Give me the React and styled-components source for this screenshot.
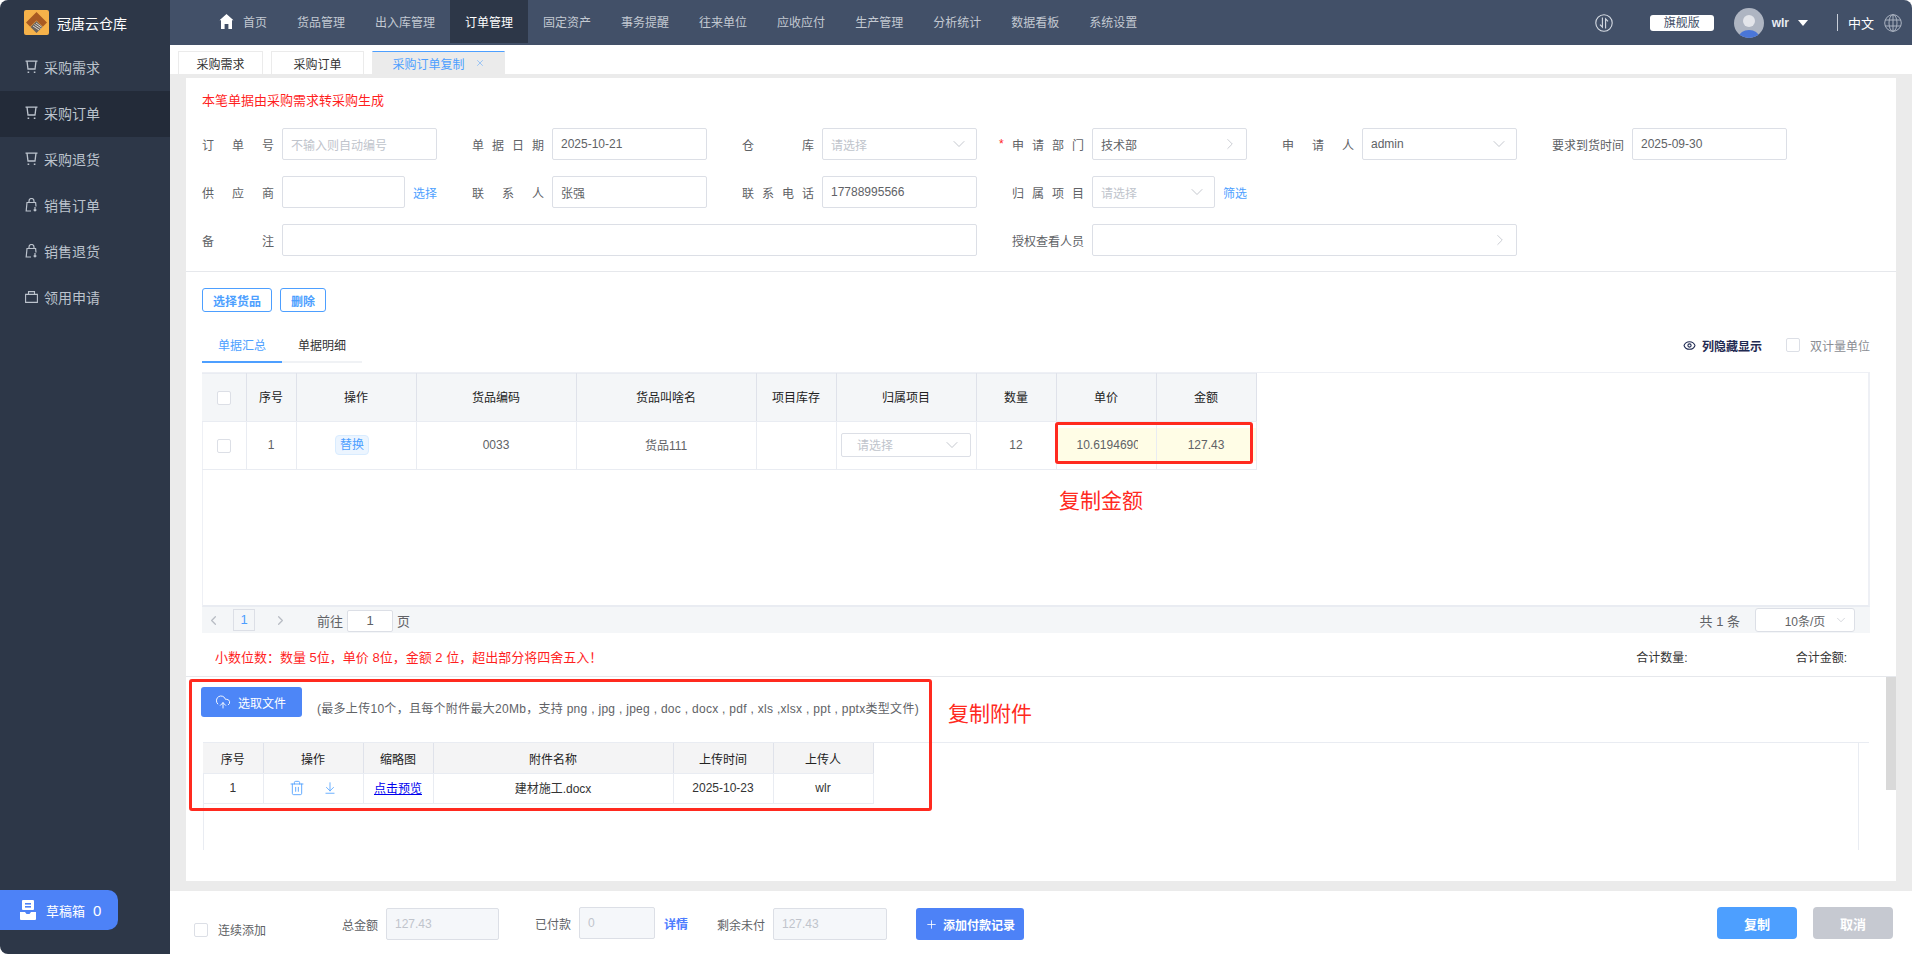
import React from "react";
import styled, { createGlobalStyle } from "styled-components";
import { ChevronDown, ChevronRight, ChevronLeft, Plus, X, Eye, Trash2, ArrowDownToLine, CloudUpload } from "lucide-react";

const GlobalStyle = createGlobalStyle`
  html, body { margin: 0; padding: 0; height: 100%; background: #fff; }
  body { font-family: "Liberation Sans", "Noto Sans CJK SC", sans-serif; font-size: 12px; color: #606266; overflow: hidden; }
  * { box-sizing: border-box; }
`;

const Shell = styled.div`
  width: 1912px;
  height: 954px;
  display: flex;
  overflow: hidden;
  border-radius: 8px;
`;

const Sidebar = styled.aside`
  width: 170px;
  flex: none;
  background: #2d3748;
  display: flex;
  flex-direction: column;
`;

const Brand = styled.div`
  height: 45px;
  display: flex;
  align-items: center;
  gap: 8px;
  padding-left: 24px;
  color: #fff;
  font-size: 14px;
`;

const SideItem = styled.div`
  height: 46px;
  display: flex;
  align-items: center;
  gap: 6px;
  padding: 0 0 2px 25px;
  font-size: 14px;
  color: #bcc3cd;
  background: ${(p) => (p.$active ? "#232b39" : "transparent")};
`;

const Draft = styled.div`
  margin-top: auto;
  margin-bottom: 24px;
  width: 118px;
  height: 40px;
  display: flex;
  align-items: center;
  padding-left: 20px;
  gap: 10px;
  background: #4d82f7;
  border-radius: 0 10px 10px 0;
  color: #fff;
  font-size: 13px;
  & b { font-weight: 400; font-size: 15px; margin-left: -2px; }
`;

const Main = styled.div`
  flex: 1;
  min-width: 0;
  display: flex;
  flex-direction: column;
`;

const Topbar = styled.header`
  height: 45px;
  flex: none;
  background: #425068;
  display: flex;
  padding-left: 34px;
  color: #c3c9d2;
`;

const NavItem = styled.div`
  height: ${(p) => (p.$active ? "43px" : "45px")};
  padding: 0 15px ${(p) => (p.$active ? "0" : "2px")};
  display: flex;
  align-items: center;
  gap: 9px;
  color: ${(p) => (p.$active ? "#fff" : "#c3c9d2")};
  background: ${(p) => (p.$active ? "#2d3748" : "transparent")};
  white-space: nowrap;
`;

const TopRight = styled.div`
  margin-left: auto;
  display: flex;
  align-items: center;
  padding-right: 10px;
  color: #fff;
`;

const Edition = styled.div`
  width: 64px;
  height: 16px;
  margin: 0 20px 0 37px;
  background: #fff;
  border-radius: 3px;
  color: #425068;
  font-size: 12px;
  line-height: 16px;
  text-align: center;
`;

const UserName = styled.span`
  margin: 0 9px 0 8px;
  font-size: 12px;
  font-weight: 700;
  color: #e7ebf1;
`;

const Caret = styled.i`
  width: 0;
  height: 0;
  border-left: 5px solid transparent;
  border-right: 5px solid transparent;
  border-top: 6px solid #fff;
`;

const Divider = styled.i`
  width: 1px;
  height: 17px;
  background: #c8ced8;
  margin: 0 10px 0 29px;
`;

const Lang = styled.span`
  font-size: 13px;
  margin-right: 10px;
`;

const TabStrip = styled.div`
  height: 29px;
  flex: none;
  display: flex;
  align-items: flex-end;
  gap: 8px;
  padding-left: 8px;
  background: #fff;
`;

const PageTab = styled.div`
  width: ${(p) => p.$w}px;
  height: 23px;
  display: flex;
  align-items: center;
  justify-content: center;
  gap: 10px;
  font-size: 12px;
  color: ${(p) => (p.$active ? "#4d9fff" : "#333")};
  background: ${(p) => (p.$active ? "#ebebeb" : "#fff")};
  border: 1px solid #ebebeb;
  border-bottom: 0;
  border-top-color: ${(p) => (p.$active ? "#4d9fff" : "#ebebeb")};
`;

const Content = styled.div`
  flex: 1;
  min-height: 0;
  background: #ebebeb;
  padding: 4px 16px 10px 16px;
`;

const Panel = styled.div`
  position: relative;
  height: 100%;
  background: #fff;
`;

const FormSection = styled.section`
  padding: 14px 16px 15px;
  border-bottom: 1px solid #e6e8ec;
`;

const RedNote = styled.div`
  color: #ff1f1f;
  font-size: 13px;
  line-height: 18px;
`;

const FormGrid = styled.div`
  margin-top: 18px;
  display: grid;
  grid-template-columns: repeat(6, 235px);
  column-gap: 35px;
  row-gap: 16px;
`;

const Field = styled.div`
  display: flex;
  align-items: center;
  gap: 8px;
  position: relative;
  grid-column: span ${(p) => p.$span || 1};
`;

const FieldGap = styled.span`
  grid-column: span 2;
`;

const Label = styled.label`
  position: relative;
  width: 72px;
  flex: none;
  text-align: justify;
  text-align-last: justify;
  color: #606266;
  font-size: 12px;
`;

const Star = styled.span`
  position: absolute;
  left: -13px;
  top: 1px;
  color: #ff1f1f;
`;

const Box = styled.div`
  flex: 1;
  min-width: 0;
  height: ${(p) => p.$h || 32}px;
  padding: 0 ${(p) => p.$pr || 9}px 0 ${(p) => p.$pl || 8}px;
  display: flex;
  align-items: center;
  justify-content: space-between;
  border: 1px solid #dcdfe6;
  border-radius: 2px;
  background: ${(p) => (p.$disabled ? "#f5f7fa" : "#fff")};
  color: ${(p) => (p.$muted ? "#c0c4cc" : "#606266")};
  font-size: 12px;
  white-space: nowrap;
  & svg { color: #b8bcc4; flex: none; margin-right: -2px; }
`;

const TextLink = styled.a`
  color: #4d9fff;
  font-size: 12px;
  flex: none;
`;

const Actions = styled.div`
  padding: 16px 16px 0;
  display: flex;
  gap: 8px;
`;

const GhostButton = styled.button`
  width: ${(p) => p.$w}px;
  height: 24px;
  padding: 0;
  background: #fff;
  border: 1px solid #4d9fff;
  border-radius: 3px;
  color: #4d9fff;
  font: 700 12px "Liberation Sans", "Noto Sans CJK SC", sans-serif;
`;

const ToolRow = styled.div`
  margin: 21px 26px 0 16px;
  display: flex;
  justify-content: space-between;
  align-items: flex-start;
`;

const SubTabs = styled.div`
  width: 160px;
  display: flex;
  border-bottom: 2px solid #f0f2f5;
`;

const SubTab = styled.div`
  width: 80px;
  height: 30px;
  margin-bottom: -2px;
  text-align: center;
  line-height: 26px;
  font-size: 12px;
  color: ${(p) => (p.$active ? "#4d9fff" : "#333")};
  border-bottom: 2px solid ${(p) => (p.$active ? "#4d9fff" : "transparent")};
`;

const Tools = styled.div`
  height: 24px;
  display: flex;
  align-items: center;
  & svg { color: #1f2a52; margin-right: 6px; }
`;

const HiddenCols = styled.span`
  font-weight: 700;
  color: #1f2a52;
  margin-right: 24px;
`;

const Check = styled.i`
  display: block;
  width: 14px;
  height: 14px;
  flex: none;
  background: #fff;
  border: 1px solid #dcdfe6;
  border-radius: 2px;
`;

const CheckLabel = styled.span`
  color: #8a8d93;
  margin-left: 10px;
`;

const TableWrap = styled.div`
  position: relative;
  margin: 9px 26px 0 16px;
  height: 235px;
  border: 1px solid #eef0f5;
  border-right-width: 2px;
  border-bottom: 2px solid #e9ecf2;
`;

const Table = styled.table`
  border-collapse: collapse;
  table-layout: fixed;
  width: ${(p) => p.$w}px;
  margin-left: -1px;
  & th, & td {
    padding: 0;
    text-align: center;
    font-size: 12px;
    font-weight: 400;
    border: 1px solid #e9ecf2;
  }
  & th {
    height: ${(p) => p.$head}px;
    padding-bottom: ${(p) => p.$headLift || 0}px;
    background: ${(p) => p.$headBg};
    color: #222;
    border-right-color: #dfe2ea;
  }
  & td { height: ${(p) => p.$row}px; padding-bottom: 2px; color: #606266; }
  & tr > :first-child { border-left: 0; }
`;

const DarkCell = styled.td`
  && { color: #333; }
`;

const CenterCheck = styled.div`
  display: flex;
  justify-content: center;
  margin-top: 2px;
`;

const SwapTag = styled.span`
  display: inline-block;
  width: 34px;
  height: 20px;
  line-height: 18px;
  margin-left: -8px;
  background: #ecf5ff;
  border: 1px solid #d9ecff;
  border-radius: 4px;
  color: #4d9fff;
`;

const RowSelect = styled.div`
  width: 130px;
  margin: 0 auto;
`;

const YellowCell = styled.div`
  height: 33px;
  display: flex;
  align-items: center;
  justify-content: ${(p) => (p.$clip ? "flex-start" : "center")};
  padding-left: ${(p) => (p.$clip ? "20px" : "0")};
  background: #fffde6;
  color: #606266;
  & span { display: block; width: 61px; overflow: hidden; white-space: nowrap; }
`;

const RedBox = styled.div`
  position: absolute;
  left: ${(p) => p.$l}px;
  top: ${(p) => p.$t}px;
  width: ${(p) => p.$w}px;
  height: ${(p) => p.$h}px;
  border: 3px solid #ff2a1f;
  border-radius: 3px;
  pointer-events: none;
`;

const RedCaption = styled.div`
  position: absolute;
  left: ${(p) => p.$l}px;
  top: ${(p) => p.$t}px;
  color: #ff2a1f;
  font-size: 21px;
  line-height: 24px;
  white-space: nowrap;
`;

const Pager = styled.div`
  margin: 0 26px 0 16px;
  height: 26px;
  background: #f4f6f8;
  display: flex;
  align-items: center;
  font-size: 13px;
  color: #606266;
  & > svg { color: #b8bcc4; flex: none; }
`;

const PrevArrow = styled(ChevronLeft)`
  margin-left: 4px;
`;

const JumpGap = styled.span`
  width: 29px;
`;

const PageNo = styled.div`
  width: 22px;
  height: 22px;
  line-height: 20px;
  margin: 0 18px 0 12px;
  text-align: center;
  background: #f4f6f8;
  border: 1px solid #dcdfe6;
  color: #4d9fff;
`;

const JumpBox = styled.div`
  width: 46px;
  height: 22px;
  line-height: 20px;
  margin: 2px 4px 0;
  text-align: center;
  background: #fff;
  border: 1px solid #dcdfe6;
  border-radius: 2px;
`;

const Total = styled.span`
  margin-left: auto;
  margin-right: 15px;
`;

const SizeSelect = styled.div`
  width: 100px;
  height: 24px;
  margin-right: 15px;
  position: relative;
  display: flex;
  align-items: center;
  justify-content: center;
  background: #fff;
  border: 1px solid #dcdfe6;
  border-radius: 3px;
  font-size: 12px;
  & svg { position: absolute; right: 6px; top: 4px; color: #b8bcc4; }
`;

const SummaryRow = styled.div`
  height: 44px;
  padding: 16px 49px 0 29px;
  display: flex;
  align-items: flex-start;
  border-bottom: 1px solid #e6e8ec;
  line-height: 18px;
`;

const SummaryNote = styled.div`
  color: #ff1f1f;
  font-size: 13px;
  flex: 1;
`;

const SummaryItem = styled.span`
  color: #333;
  font-size: 12px;
  margin-left: ${(p) => p.$gap || 0}px;
`;

const UploadSection = styled.section`
  position: relative;
  padding-top: 10px;
`;

const UploadRow = styled.div`
  padding-left: 15px;
  display: flex;
`;

const UploadButton = styled.button`
  width: 101px;
  height: 30px;
  padding: 0 0 0 14px;
  display: flex;
  align-items: center;
  gap: 7px;
  border: 0;
  border-radius: 3px;
  background: #4d86f7;
  color: #fff;
  font: 12px "Liberation Sans", "Noto Sans CJK SC", sans-serif;
`;

const UploadHint = styled.div`
  margin: 14px 0 0 15px;
  line-height: 16px;
  font-size: 12px;
  letter-spacing: 0.29px;
  color: #606266;
`;

const FilesWrap = styled.div`
  margin: 25px 37px 0 17px;
  height: 108px;
  border-left: 1px solid #e9ecf2;
  border-right: 1px solid #e9ecf2;
  position: relative;
  &::before {
    content: "";
    position: absolute;
    left: -1px;
    right: -11px;
    top: 0;
    height: 1px;
    background: #e9ecf2;
  }
`;

const IconCell = styled.div`
  display: flex;
  justify-content: center;
  align-items: center;
  gap: 18px;
  color: #4d9fff;
`;

const Preview = styled.a`
  color: #0000ee;
  text-decoration: underline;
`;

const Scrollbar = styled.div`
  position: absolute;
  right: 0;
  top: 599px;
  width: 10px;
  height: 113px;
  background: #d9d9d9;
`;

const Footer = styled.footer`
  height: 63px;
  flex: none;
  background: #fff;
  padding: 16px 19px 0 24px;
  display: flex;
  align-items: flex-start;
  border-bottom-right-radius: 8px;
`;

const FooterCheck = styled.div`
  width: 148px;
  margin-top: 11px;
  display: flex;
  align-items: center;
  gap: 10px;
  font-size: 12px;
  color: #606266;
  padding-top: 3px;
`;

const FooterField = styled.div`
  display: flex;
  align-items: center;
  gap: 8px;
  width: ${(p) => p.$w}px;
  margin-right: ${(p) => p.$mr}px;
  margin-top: ${(p) => p.$mt ?? 1}px;
  color: #606266;
  flex: none;
`;

const DetailLink = styled.a`
  color: #4d7cff;
  font-weight: 700;
  flex: none;
  margin-left: 1px;
`;

const AddPayment = styled.button`
  width: 108px;
  height: 32px;
  margin-top: 1px;
  padding: 0;
  display: flex;
  align-items: center;
  justify-content: center;
  gap: 5px;
  border: 0;
  border-radius: 3px;
  background: #4d82f7;
  color: #fff;
  font: 700 12px "Liberation Sans", "Noto Sans CJK SC", sans-serif;
`;

const FooterButton = styled.button`
  width: 80px;
  height: 32px;
  margin-left: ${(p) => p.$ml || 16}px;
  border: 0;
  border-radius: 4px;
  color: #fff;
  background: ${(p) => p.$bg};
  font: 700 13px "Liberation Sans", "Noto Sans CJK SC", sans-serif;
`;

const Logo = () => (
  <svg width="25" height="25" viewBox="0 0 25 25">
    <rect width="25" height="25" rx="2" fill="#f6b24a" />
    <path d="M12.5 2 L23 12.5 L18.8 16.7 L12.5 10.4 L6.2 16.7 L2 12.5 Z" fill="#a95a22" />
    <path d="M12.5 11 L18.5 17 L12.5 23 L6.5 17 Z" fill="#6b625c" />
    <path d="M9 16 L15 20 M10.5 14.5 L16.5 18.5 M12 13 L17.5 17" stroke="#e8e2da" strokeWidth="0.9" />
  </svg>
);

const HomeIcon = () => (
  <svg width="15" height="15" viewBox="0 0 15 15" fill="#fff">
    <path d="M7.5 0 L14.5 6.2 H13 V15 H9.4 V10 H5.6 V15 H2 V6.2 H0.5 Z" />
  </svg>
);

const Cart = () => (
  <svg width="13" height="14" viewBox="0 0 13 14" fill="none" stroke="currentColor" strokeWidth="1.3">
    <path d="M0.5 1.2h12M2 1.2l1 7.8h7l1-7.8" />
    <path d="M3.4 11.5v1.5M9.6 11.5v1.5" strokeWidth="1.6" />
  </svg>
);

const Bag = () => (
  <svg width="13" height="14" viewBox="0 0 13 14" fill="none" stroke="currentColor" strokeWidth="1.2">
    <path d="M4 4.5V3a2.5 2.5 0 0 1 5 0v1.5" />
    <path d="M6 13H1.2L2 4.5h8.6l.4 4" />
    <path d="M10 9v4M8.6 11.6L10 13l1.4-1.4" />
  </svg>
);

const Briefcase = () => (
  <svg width="13" height="12" viewBox="0 0 13 12" fill="none" stroke="currentColor" strokeWidth="1.1">
    <path d="M.6 3.4h11.8v8H.6zM3.5 3.4V.6h6v2.8" />
  </svg>
);

const VersionIcon = () => (
  <svg width="18" height="18" viewBox="0 0 18 18" fill="none" stroke="#d7dce4" strokeWidth="1.1">
    <circle cx="9" cy="9" r="8.2" />
    <path d="M7.4 3.5v9.6L5 10.6M10.6 14.5V4.9l2.4 2.5" />
  </svg>
);

const Avatar = () => (
  <svg width="30" height="30" viewBox="0 0 30 30">
    <defs>
      <clipPath id="avatarClip">
        <circle cx="15" cy="15" r="15" />
      </clipPath>
    </defs>
    <g clipPath="url(#avatarClip)">
      <rect width="30" height="30" fill="#aeb5c2" />
      <circle cx="15" cy="13" r="6" fill="#e3e5ea" />
      <ellipse cx="15" cy="29" rx="10" ry="7" fill="#4a76d8" />
    </g>
  </svg>
);

const Globe = () => (
  <svg width="18" height="18" viewBox="0 0 18 18" fill="none" stroke="#aab2c0" strokeWidth="1">
    <circle cx="9" cy="9" r="8.3" />
    <ellipse cx="9" cy="9" rx="4" ry="8.3" />
    <path d="M9 .7v16.6M1 6h16M1 12h16" />
  </svg>
);

const DraftIcon = () => (
  <svg width="16" height="20" viewBox="0 0 16 20" fill="#fff">
    <path d="M3 0h10a1 1 0 0 1 1 1v8a1 1 0 0 1-1 1H3a1 1 0 0 1-1-1V1a1 1 0 0 1 1-1z" />
    <rect x="5" y="3" width="6" height="1.6" fill="#4d82f7" />
    <rect x="5" y="6" width="6" height="1.6" fill="#4d82f7" />
    <path d="M0 12h5l1.5 2h3L11 12h5v7a1 1 0 0 1-1 1H1a1 1 0 0 1-1-1z" />
  </svg>
);

const navItems = ["货品管理", "出入库管理", "订单管理", "固定资产", "事务提醒", "往来单位", "应收应付", "生产管理", "分析统计", "数据看板", "系统设置"];

const sideItems = [
  ["采购需求", Cart],
  ["采购订单", Cart, true],
  ["采购退货", Cart],
  ["销售订单", Bag],
  ["销售退货", Bag],
  ["领用申请", Briefcase],
];

const orderCols = [44, 50, 120, 160, 180, 80, 140, 80, 100, 100];
const orderHead = ["", "序号", "操作", "货品编码", "货品叫啥名", "项目库存", "归属项目", "数量", "单价", "金额"];
const fileCols = [60, 100, 70, 240, 100, 100];
const fileHead = ["序号", "操作", "缩略图", "附件名称", "上传时间", "上传人"];

const Down = () => <ChevronDown size={20} strokeWidth={1} />;
const Right = () => <ChevronRight size={18} strokeWidth={1} />;

export default function App() {
  return (
    <Shell>
      <GlobalStyle />
      <Sidebar>
        <Brand>
          <Logo />
          冠唐云仓库
        </Brand>
        {sideItems.map(([name, Icon, active]) => (
          <SideItem key={name} $active={active}>
            <Icon />
            {name}
          </SideItem>
        ))}
        <Draft>
          <DraftIcon />
          <span>草稿箱</span>
          <b>0</b>
        </Draft>
      </Sidebar>

      <Main>
        <Topbar>
          <NavItem>
            <HomeIcon />
            首页
          </NavItem>
          {navItems.map((name) => (
            <NavItem key={name} $active={name === "订单管理"}>
              {name}
            </NavItem>
          ))}
          <TopRight>
            <VersionIcon />
            <Edition>旗舰版</Edition>
            <Avatar />
            <UserName>wlr</UserName>
            <Caret />
            <Divider />
            <Lang>中文</Lang>
            <Globe />
          </TopRight>
        </Topbar>

        <TabStrip>
          <PageTab $w={85}>采购需求</PageTab>
          <PageTab $w={93}>采购订单</PageTab>
          <PageTab $w={133} $active>
            采购订单复制
            <X size={10} strokeWidth={1.2} />
          </PageTab>
        </TabStrip>

        <Content>
          <Panel>
            <FormSection>
              <RedNote>本笔单据由采购需求转采购生成</RedNote>
              <FormGrid>
                <Field>
                  <Label>订单号</Label>
                  <Box $muted>不输入则自动编号</Box>
                </Field>
                <Field>
                  <Label>单据日期</Label>
                  <Box>2025-10-21</Box>
                </Field>
                <Field>
                  <Label>仓库</Label>
                  <Box $muted>请选择<Down /></Box>
                </Field>
                <Field>
                  <Label><Star>*</Star>申请部门</Label>
                  <Box>技术部<Right /></Box>
                </Field>
                <Field>
                  <Label>申请人</Label>
                  <Box>admin<Down /></Box>
                </Field>
                <Field>
                  <Label>要求到货时间</Label>
                  <Box>2025-09-30</Box>
                </Field>

                <Field>
                  <Label>供应商</Label>
                  <Box />
                  <TextLink>选择</TextLink>
                </Field>
                <Field>
                  <Label>联系人</Label>
                  <Box>张强</Box>
                </Field>
                <Field>
                  <Label>联系电话</Label>
                  <Box>17788995566</Box>
                </Field>
                <Field>
                  <Label>归属项目</Label>
                  <Box $muted>请选择<Down /></Box>
                  <TextLink>筛选</TextLink>
                </Field>
                <FieldGap />

                <Field $span={3}>
                  <Label>备注</Label>
                  <Box />
                </Field>
                <Field $span={2}>
                  <Label>授权查看人员</Label>
                  <Box><span /><Right /></Box>
                </Field>
              </FormGrid>
            </FormSection>

            <Actions>
              <GhostButton $w={70}>选择货品</GhostButton>
              <GhostButton $w={46}>删除</GhostButton>
            </Actions>

            <ToolRow>
              <SubTabs>
                <SubTab $active>单据汇总</SubTab>
                <SubTab>单据明细</SubTab>
              </SubTabs>
              <Tools>
                <Eye size={13} />
                <HiddenCols>列隐藏显示</HiddenCols>
                <Check />
                <CheckLabel>双计量单位</CheckLabel>
              </Tools>
            </ToolRow>

            <TableWrap>
              <Table $w={1054} $head={48} $row={48} $headBg="#f4f6f8" $headLift={2}>
                <colgroup>
                  {orderCols.map((w, i) => <col key={i} width={w} />)}
                </colgroup>
                <thead>
                  <tr>
                    {orderHead.map((h, i) => (
                      <th key={i}>{i === 0 ? <CenterCheck><Check /></CenterCheck> : h}</th>
                    ))}
                  </tr>
                </thead>
                <tbody>
                  <tr>
                    <td><CenterCheck><Check /></CenterCheck></td>
                    <td>1</td>
                    <td><SwapTag>替换</SwapTag></td>
                    <td>0033</td>
                    <td>货品111</td>
                    <td />
                    <td><RowSelect><Box $h={24} $muted $pl={15} $pr={10}>请选择<Down /></Box></RowSelect></td>
                    <td>12</td>
                    <td><YellowCell $clip><span>10.61946903</span></YellowCell></td>
                    <td><YellowCell>127.43</YellowCell></td>
                  </tr>
                </tbody>
              </Table>
              <RedBox $l={852} $t={49} $w={198} $h={42} />
              <RedCaption $l={856} $t={116}>复制金额</RedCaption>
            </TableWrap>

            <Pager>
              <PrevArrow size={15} strokeWidth={2} />
              <PageNo>1</PageNo>
              <ChevronRight size={15} strokeWidth={2} />
              <JumpGap />
              前往
              <JumpBox>1</JumpBox>
              页
              <Total>共 1 条</Total>
              <SizeSelect>10条/页<ChevronDown size={14} strokeWidth={1} /></SizeSelect>
            </Pager>

            <SummaryRow>
              <SummaryNote>小数位数：数量 5位，单价 8位，金额 2 位，超出部分将四舍五入！</SummaryNote>
              <SummaryItem>合计数量:</SummaryItem>
              <SummaryItem $gap={108}>合计金额:</SummaryItem>
            </SummaryRow>

            <UploadSection>
              <UploadRow>
                <UploadButton><CloudUpload size={16} strokeWidth={1.4} />选取文件</UploadButton>
                <UploadHint>(最多上传10个，且每个附件最大20Mb，支持 png , jpg , jpeg , doc , docx , pdf , xls ,xlsx , ppt , pptx类型文件)</UploadHint>
              </UploadRow>
              <FilesWrap>
                <Table $w={670} $head={31} $row={30} $headBg="#f4f4f5">
                  <colgroup>
                    {fileCols.map((w, i) => <col key={i} width={w} />)}
                  </colgroup>
                  <thead>
                    <tr>{fileHead.map((h) => <th key={h}>{h}</th>)}</tr>
                  </thead>
                  <tbody>
                    <tr>
                      <DarkCell>1</DarkCell>
                      <td>
                        <IconCell>
                          <Trash2 size={16} strokeWidth={1.3} />
                          <ArrowDownToLine size={14} strokeWidth={1.4} />
                        </IconCell>
                      </td>
                      <td><Preview>点击预览</Preview></td>
                      <DarkCell>建材施工.docx</DarkCell>
                      <DarkCell>2025-10-23</DarkCell>
                      <DarkCell>wlr</DarkCell>
                    </tr>
                  </tbody>
                </Table>
              </FilesWrap>
              <RedBox $l={3} $t={2} $w={743} $h={132} />
              <RedCaption $l={762} $t={25}>复制附件</RedCaption>
            </UploadSection>

            <Scrollbar />
          </Panel>
        </Content>

        <Footer>
          <FooterCheck><Check />连续添加</FooterCheck>
          <FooterField $w={157} $mr={36}>
            总金额
            <Box $disabled $muted>127.43</Box>
          </FooterField>
          <FooterField $w={153} $mr={29} $mt={0}>
            已付款
            <Box $disabled $muted>0</Box>
            <DetailLink>详情</DetailLink>
          </FooterField>
          <FooterField $w={170} $mr={29}>
            剩余未付
            <Box $disabled $muted>127.43</Box>
          </FooterField>
          <AddPayment><Plus size={13} strokeWidth={1.5} />添加付款记录</AddPayment>
          <FooterButton $bg="#4d9fff" $ml={693}>复制</FooterButton>
          <FooterButton $bg="#c6c9d1">取消</FooterButton>
        </Footer>
      </Main>
    </Shell>
  );
}
